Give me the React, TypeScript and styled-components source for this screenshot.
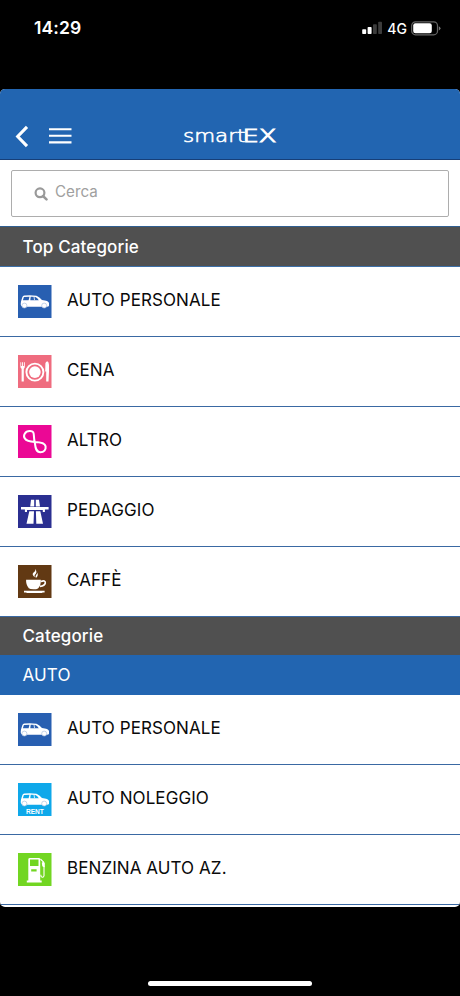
import React from "react";
import styled, { createGlobalStyle } from "styled-components";

const GlobalStyle = createGlobalStyle`
  * { box-sizing: border-box; }
  body { margin: 0; background: #000; font-family: Inter, "Liberation Sans", sans-serif; }
`;

const Phone = styled.div`
  width: 460px;
  height: 996px;
  background: #000;
  display: flex;
  flex-direction: column;
  overflow: hidden;
`;

const StatusBar = styled.header`
  height: 89px;
  flex: none;
  padding: 17px 19px 0 34px;
  display: flex;
  justify-content: space-between;
  align-items: flex-start;
  color: #fff;
`;

const Clock = styled.div`
  font-size: 17.5px;
  font-weight: 600;
  line-height: 22px;
  letter-spacing: 0.1px;
`;

const Indicators = styled.div`
  height: 22px;
  display: flex;
  align-items: center;
`;

const Network = styled.span`
  font-size: 14px;
  font-weight: 500;
  line-height: 22px;
  margin: 1px 4px 0 5px;
`;

const Screen = styled.main`
  height: 818px;
  flex: none;
  background: #fff;
  border-radius: 5px;
  overflow: hidden;
`;

const NavBar = styled.nav`
  height: 71px;
  background: #2265b1;
  border-bottom: 1px solid #173f78;
  display: grid;
  grid-template-columns: 183px 94px 1fr;
  padding-top: 34px;
`;

const NavActions = styled.div`
  display: flex;
  align-items: flex-start;
  padding-left: 15px;
  gap: 20px;
`;

const IconButton = styled.button`
  padding: 0;
  border: 0;
  background: none;
  display: flex;
`;

const SearchArea = styled.div`
  height: 66px;
  padding: 10px 11px 0;
`;

const SearchField = styled.label`
  height: 47px;
  border: 1.5px solid #adadad;
  border-radius: 2px;
  display: flex;
  align-items: center;
  padding: 0 0 4px 22px;
  gap: 7px;
  color: #a0a0a0;
  font-size: 15.2px;
`;

const SearchIcon = styled.svg`
  margin-top: 4px;
`;

const SectionBar = styled.h2<{ $height: number; $tone?: "blue"; $ruled?: boolean }>`
  margin: 0;
  height: ${(p) => p.$height}px;
  background: ${(p) => (p.$tone === "blue" ? "#2265b1" : "#505050")};
  border-top: ${(p) => (p.$ruled ? "1px solid #315f91" : "0")};
  border-bottom: ${(p) => (p.$ruled ? "1px solid #3d70a8" : "0")};
  color: #fff;
  font-size: 17px;
  font-weight: ${(p) => (p.$tone === "blue" ? 400 : 450)};
  letter-spacing: 0.14px;
  display: flex;
  align-items: center;
  padding-left: 22.5px;
`;

const List = styled.ul`
  margin: 0;
  padding: 0;
  list-style: none;
`;

const Row = styled.li`
  height: 70px;
  border-bottom: 1px solid #3a69a3;
  display: flex;
  align-items: center;
  gap: 15.5px;
  padding-left: 18px;
`;

const RowLabel = styled.span`
  color: #0a0a0a;
  font-size: 17px;
  line-height: 22px;
  letter-spacing: 0.08px;
  padding-bottom: 4px;
  white-space: nowrap;
`;

const HomeIndicator = styled.div`
  width: 164px;
  height: 5px;
  border-radius: 3px;
  background: #fff;
  margin: 74px auto 0;
  flex: none;
`;

const Car = () => (
  <>
    <path
      fill="#fff"
      fillRule="evenodd"
      d="M3 16.5 4.3 12.2Q4.8 10.7 6.3 10.6Q13 10 18.5 10.8Q21.5 12.3 24 14.9Q30.5 15.4 31 18.1V20.7Q30.8 21.7 28.8 21.7H4.8Q2.7 21.4 2.7 19.2ZM5.9 12.1 4.9 15.2H10.6L11.5 11.8Q8 11.8 5.9 12.1ZM12.7 11.8 12.3 15.2H20.8Q19.5 12.8 17.4 12Q15 11.7 12.7 11.8Z"
    />
    <path d="M16 11.7 16.5 15" stroke="#fff" strokeWidth="0.8" />
    {[6.4, 26.2].map((x) => (
      <circle key={x} cx={x} cy="20.6" r="2.5" fill="#fff" stroke="#9db7da" strokeWidth="0.6" />
    ))}
  </>
);

const Dinner = () => (
  <g fill="#fff">
    <circle cx="16.9" cy="17.1" r="8.5" fill="none" stroke="#fff" strokeWidth="1.9" />
    <circle cx="16.9" cy="17.1" r="5.8" />
    <path d="M2.4 7.3H3.2V11H4.1V7.3H5V11H5.9V7.3H6.8V11.7Q6.7 13.2 5.8 13.7V26.4H3.6V13.7Q2.4 13.2 2.4 11.7ZM27.4 8.2Q27.8 6.7 29.3 6.2Q30.9 6.8 31 10V16.5L30.5 26.4H28.2V16.5H27.2Z" />
  </g>
);

const Loop = () => (
  <path
    d="M16.7 16.9C15 10.5 17.5 5.8 11.7 6C7 6.2 4.8 10.4 6.8 13.4C8.6 16.3 13.5 16.8 16.7 16.9C23 17 27 18 27.6 21.2C28.2 24.6 25.8 27.3 22.5 27.3C17 27.3 17.4 20.4 16.7 16.9Z"
    fill="none"
    stroke="#fff"
    strokeWidth="2"
  />
);

const Motorway = () => (
  <path
    fill="#fff"
    d="M13 4.7H16.2V11.4H12.2ZM17.8 4.7H21L22 11.4H17.8ZM3 12.1H30.6V14.4H26.9V16.9H24.8V15H9V16.9H6.9V14.4H3ZM11.3 16.2H16L15.5 28.8H8.5ZM17.9 16.2H22.3L25 28.8H18.3Z"
  />
);

const Coffee = () => (
  <>
    <path d="M8.1 14.8H22.8Q23.3 20 20 23.4Q18.5 24.3 15.4 24.3Q12 24.3 10.8 23.2Q7.8 19.8 8.1 14.8ZM6 25.7H26.6V27.4H24.8L23.8 28H9L8 27.4H6Z" fill="#fff" />
    <path d="M22.8 16.5Q27.5 14.7 27.3 18Q26.8 20.8 22 21.4" fill="none" stroke="#fff" strokeWidth="1.6" />
    <path d="M17.2 4.1Q18 6.3 15.6 7.6Q13.3 9.4 16.6 12.2Q16.1 9.9 17.9 8.5Q19.2 7 17.2 4.1ZM19.1 7.5Q19.4 9 18.1 9.9Q17 11.1 17.9 13Q21 10.3 19.1 7.5Z" fill="#fff" />
  </>
);

const Pump = () => (
  <>
    <path
      d="M10.3 6.3Q10.4 4.9 11.8 4.9H20.8Q22.2 4.9 22.2 6.3V27.5H23.7V29.5H8.8V27.5H10.3ZM12 6.6V12.9H20.5V6.6ZM13.2 16.2V18.4H18.6V16.2Z"
      fill="#fff"
      fillRule="evenodd"
    />
    <path d="M22.4 6 25.8 9.3Q24.2 12 26 13.8V22.7Q25.8 24.4 24.3 24.3Q22.7 24.1 22.8 21.8" fill="none" stroke="#fff" strokeWidth="1.1" />
    <path d="M23.8 9.7 25.5 8.5 26.8 10.5V14.3L24.5 13.5Z" fill="#fff" />
  </>
);

const RentCar = () => (
  <>
    <Car />
    <text
      x="16.9"
      y="30.8"
      fill="#fff"
      fontFamily="Liberation Sans, sans-serif"
      fontSize="7"
      fontWeight="700"
      textAnchor="middle"
      textLength="18"
      lengthAdjust="spacingAndGlyphs"
    >
      RENT
    </text>
  </>
);

type Category = { label: string; color: string; Icon: React.FC };

const topCategories: Category[] = [
  { label: "AUTO PERSONALE", color: "#285fb1", Icon: Car },
  { label: "CENA", color: "#ef6c7f", Icon: Dinner },
  { label: "ALTRO", color: "#eb0895", Icon: Loop },
  { label: "PEDAGGIO", color: "#2b2f91", Icon: Motorway },
  { label: "CAFFÈ", color: "#623913", Icon: Coffee },
];

const autoCategories: Category[] = [
  { label: "AUTO PERSONALE", color: "#285fb1", Icon: Car },
  { label: "AUTO NOLEGGIO", color: "#0ea8ea", Icon: RentCar },
  { label: "BENZINA AUTO AZ.", color: "#72d622", Icon: Pump },
];

const CategoryList = ({ items }: { items: Category[] }) => (
  <List>
    {items.map(({ label, color, Icon }) => (
      <Row key={label}>
        <svg width="33.5" height="33.5" viewBox="0 0 33.5 33.5">
          <rect width="33.5" height="33.5" fill={color} />
          <Icon />
        </svg>
        <RowLabel>{label}</RowLabel>
      </Row>
    ))}
  </List>
);

export default function App() {
  return (
    <Phone>
      <GlobalStyle />
      <StatusBar>
        <Clock>14:29</Clock>
        <Indicators>
          <svg width="21" height="14" viewBox="0 0 21 14">
            <rect x="1.2" y="8.3" width="4" height="4.7" rx="0.8" fill="#fff" />
            <rect x="6.6" y="6" width="4" height="7" rx="0.8" fill="#fff" />
            <rect x="12" y="3.3" width="3.8" height="9.7" rx="0.8" fill="#3c3c3c" />
            <rect x="17.2" y="0.8" width="3.8" height="12.2" rx="0.8" fill="#3c3c3c" />
          </svg>
          <Network>4G</Network>
          <svg width="30" height="15" viewBox="0 0 30 15">
            <rect x="0.7" y="0.8" width="25.8" height="13" rx="3.8" fill="none" stroke="#666" strokeWidth="1.2" />
            <rect x="2.2" y="2.3" width="18.6" height="10" rx="2.2" fill="#fff" />
            <path d="M27.8 5.2Q29.5 6 29.5 7.3Q29.5 8.8 27.8 9.6Z" fill="#777" />
          </svg>
        </Indicators>
      </StatusBar>
      <Screen>
        <NavBar>
          <NavActions>
            <IconButton aria-label="Indietro">
              <svg width="14" height="26" viewBox="0 0 14 26">
                <path d="M12 3.9 2.7 13.5 12 23.1" fill="none" stroke="#fff" strokeWidth="3.1" />
              </svg>
            </IconButton>
            <IconButton aria-label="Menu">
              <svg width="23" height="26" viewBox="0 0 23 26">
                <path d="M0 6.2H22.5M0 12.8H22.5M0 19.4H22.5" stroke="#fff" strokeWidth="2.1" />
              </svg>
            </IconButton>
          </NavActions>
          <svg width="94" height="28" viewBox="0 0 94 28" role="img">
            <g fill="#fff" stroke="#fff" fontFamily="DejaVu Sans" fontWeight="200">
              <text x="0" y="18.6" fontSize="18.5" textLength="62.5" lengthAdjust="spacingAndGlyphs" strokeWidth="0.6">
                smart
              </text>
              <text x="59.5" y="18.6" fontSize="18.5" textLength="34" lengthAdjust="spacingAndGlyphs" strokeWidth="1">
                EX
              </text>
            </g>
          </svg>
        </NavBar>
        <SearchArea>
          <SearchField>
            <SearchIcon width="14" height="14" viewBox="0 0 14 14">
              <circle cx="6" cy="5.8" r="4.4" fill="none" stroke="#999" strokeWidth="2.2" />
              <path d="M9 9 12.5 12.4" stroke="#999" strokeWidth="2.5" strokeLinecap="round" />
            </SearchIcon>
            Cerca
          </SearchField>
        </SearchArea>
        <SectionBar $height={41} $ruled>Top Categorie</SectionBar>
        <CategoryList items={topCategories} />
        <SectionBar $height={38}>Categorie</SectionBar>
        <SectionBar $height={40} $tone="blue">AUTO</SectionBar>
        <CategoryList items={autoCategories} />
      </Screen>
      <HomeIndicator />
    </Phone>
  );
}
